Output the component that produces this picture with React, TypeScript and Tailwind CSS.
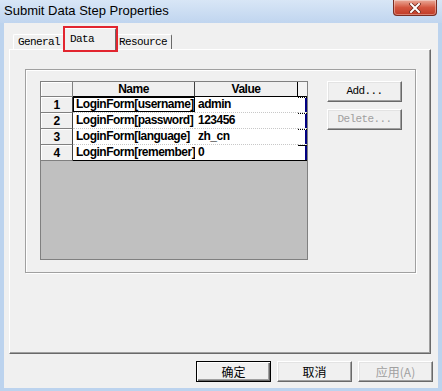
import React from "react";

const rows = [
  { n: 1, name: "LoginForm[username]", value: "admin" },
  { n: 2, name: "LoginForm[password]", value: "123456" },
  { n: 3, name: "LoginForm[language]", value: "zh_cn" },
  { n: 4, name: "LoginForm[remember]", value: "0" },
];

const CloseButton: React.FC = () => (
  <div className="mr-[5px] flex h-[16px] w-[44px] items-center justify-center rounded-b-[4px] border border-t-0 border-[#7a2d22] bg-gradient-to-b from-[#e9a999] via-[#d3553f] to-[#c03a25] shadow-[inset_0_0_0_1px_rgba(255,255,255,0.35)]">
    <svg width="12" height="10" viewBox="0 0 12 10">
      <path d="M2 1 L10 9 M10 1 L2 9" stroke="#6b2418" strokeWidth="3.4" strokeLinecap="square" />
      <path d="M2 1 L10 9 M10 1 L2 9" stroke="#ffffff" strokeWidth="2" strokeLinecap="square" />
    </svg>
  </div>
);

const ClassicButton: React.FC<{ label: string; disabled?: boolean; isDefault?: boolean; mono?: boolean }> = ({
  label,
  disabled,
  isDefault,
  mono,
}) => (
  <div
    className={`flex h-[21px] w-[75px] items-center justify-center bg-[#f0f0f0] ${
      isDefault
        ? "border border-black shadow-[inset_1px_1px_0_#fff,inset_-1px_-1px_0_#696969,inset_-2px_-2px_0_#a0a0a0]"
        : "border border-t-white border-l-white border-r-[#696969] border-b-[#696969] shadow-[inset_-1px_-1px_0_#a0a0a0,inset_1px_1px_0_#e3e3e3]"
    } ${disabled ? "text-[#a0a0a0]" : "text-black"} ${
      mono
        ? "font-['Liberation_Mono',monospace] text-[11px] tracking-[-0.6px]"
        : "font-['Noto_Sans_CJK_SC',sans-serif] text-[12px]"
    }`}
  >
    {label}
  </div>
);

const DataGrid: React.FC = () => (
  <div className="flex h-[179px] w-[268px] flex-col border border-[#808080] bg-[#c0c0c0] font-['Liberation_Sans',Arial,sans-serif] text-[12px] font-bold tracking-[-0.5px] text-black">
    <div className="grid h-[15px] grid-cols-[32px_122px_103px_9px]">
      <div className="border-b border-r border-b-[#808080] border-r-[#808080] bg-[#f0f0f0] shadow-[inset_1px_1px_0_#fff]" />
      <div className="flex items-center justify-center border-b border-r border-b-black border-r-[#404040] bg-[#f0f0f0] leading-none">
        Name
      </div>
      <div className="flex items-center justify-center border-b border-r border-b-black border-r-black bg-[#f0f0f0] leading-none">
        Value
      </div>
      <div className="border-b border-b-black bg-[#f4f4f4]" />
    </div>
    {rows.map((r, i) => {
      const last = i === rows.length - 1;
      const line = last ? "border-b-black border-solid" : "border-b-[#c8c8c8] border-dotted";
      return (
        <div key={r.n} className="grid h-[16px] grid-cols-[32px_122px_103px_9px]">
          <div className="flex items-center justify-center border-b border-r border-b-[#808080] border-r-[#404040] bg-[#f0f0f0] leading-none shadow-[inset_1px_1px_0_#fff]">
            {r.n}
          </div>
          <div
            className={`overflow-hidden whitespace-nowrap border-b bg-white pl-[3px] leading-[15px] ${line} ${
              i === 0 ? "shadow-[inset_0_0_0_1px_#000]" : ""
            }`}
          >
            {r.name}
          </div>
          <div className={`overflow-hidden whitespace-nowrap border-b bg-white pl-[3px] leading-[15px] ${line}`}>
            {r.value}
          </div>
          <div className={`border-t border-b border-t-black bg-white shadow-[inset_-2px_0_0_#000080] ${line}`} />
        </div>
      );
    })}
    <div className="flex-1" />
  </div>
);

export default function App() {
  return (
    <div className="flex h-[391px] w-[442px] flex-col overflow-hidden bg-[#bcd3ee] font-['Liberation_Sans',Arial,sans-serif]">
      {/* title bar */}
      <div className="flex h-[23px] shrink-0 items-start justify-between bg-gradient-to-b from-[#d8e6f6] to-[#c0d5ef]">
        <span className="pl-[4px] pt-[2px] text-[13px] leading-[17px] text-black">Submit Data Step Properties</span>
        <CloseButton />
      </div>

      {/* client area */}
      <div className="mx-[4px] mb-[3px] flex flex-1 flex-col bg-[#f0f0f0]">
        {/* tab strip */}
        <div className="relative flex h-[26px] shrink-0 items-end pl-[9px] font-['Liberation_Mono',monospace] text-[11px] tracking-[-0.6px] text-black">
          <div className="h-[15px] w-[50px] rounded-tl-[2px] border-l border-t border-white pl-[4px] leading-[15px]">General</div>
          <div className="relative z-10 -mb-px h-[22px] w-[53px] rounded-t-[2px] border-l border-r border-t border-l-white border-r-[#696969] border-t-white bg-[#f0f0f0] pl-[6px] pt-[3px] leading-[14px]">
            Data
          </div>
          <div className="h-[15px] w-[56px] rounded-tr-[2px] border-r border-t border-r-[#696969] border-t-white pl-[3px] leading-[15px]">
            Resource
          </div>
          {/* annotation */}
          <div className="absolute left-[59px] top-[3px] z-20 h-[26px] w-[55px] border-2 border-[#e2252f]" />
        </div>

        {/* tab panel */}
        <div className="ml-[5px] flex h-[305px] w-[422px] shrink-0 flex-col border border-b-[#696969] border-l-white border-r-[#696969] border-t-white shadow-[inset_-1px_-1px_0_#a0a0a0]">
          <div className="ml-[15px] mt-[19px] flex h-[204px] w-[391px] items-start border border-[#a0a0a0] pl-[14px] pt-[11px] shadow-[inset_1px_1px_0_#fff,1px_1px_0_#fff]">
            <DataGrid />
            <div className="ml-[19px] flex flex-col gap-[7px]">
              <ClassicButton label="Add..." mono />
              <ClassicButton label="Delete..." mono disabled />
            </div>
          </div>
        </div>

        {/* dialog buttons */}
        <div className="flex justify-end gap-[6px] pr-[5px] pt-[7px]">
          <ClassicButton label="确定" isDefault />
          <ClassicButton label="取消" />
          <ClassicButton label="应用(A)" disabled />
        </div>
      </div>
    </div>
  );
}
